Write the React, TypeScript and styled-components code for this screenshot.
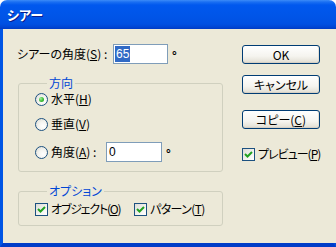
import React from 'react'
import styled, { createGlobalStyle } from 'styled-components'

const GlobalStyle = createGlobalStyle`
  html, body {
    margin: 0;
    padding: 0;
    background: #ffffff;
  }
  body {
    font-family: "Noto Sans CJK JP", "Liberation Sans", sans-serif;
    font-size: 12px;
    font-feature-settings: 'palt';
    color: #000000;
  }
`

const Window = styled.div`
  width: 336px;
  height: 247px;
  display: flex;
  flex-direction: column;
`

const TitleBar = styled.div`
  height: 29px;
  flex: 0 0 29px;
  box-sizing: border-box;
  border-radius: 7px 7px 0 0;
  background: linear-gradient(
    to bottom,
    #3c8cf8 0px,
    #1a6ff2 2px,
    #0058ee 5px,
    #0055e8 16px,
    #0050e2 24px,
    #0046d4 27px,
    #003bc4 29px
  );
  display: flex;
  align-items: center;
  padding: 0 7px 1px;
`

const Title = styled.span`
  color: #ffffff;
  font-weight: bold;
  font-size: 13px;
  text-shadow: 1px 1px 0 #0a1e8c;
`

const Frame = styled.div`
  flex: 1;
  display: flex;
  border-left: 3px solid #0055e5;
  border-right: 3px solid #0048dc;
  border-bottom: 4px solid #003cc8;
  box-shadow: inset 1px 0 0 #0831d9;
`

const Body = styled.div`
  flex: 1;
  display: flex;
  background: #ece9d8;
  padding: 15px 16px 0 14px;
`

const LeftCol = styled.div`
  width: 206px;
  display: flex;
  flex-direction: column;
`

const RightCol = styled.div`
  margin-left: 19px;
  width: 78px;
  display: flex;
  flex-direction: column;
`

const Row = styled.div<{ $h?: number; $mt?: number }>`
  display: flex;
  align-items: center;
  height: ${(p) => p.$h ?? 18}px;
  margin-top: ${(p) => p.$mt ?? 0}px;
  white-space: nowrap;
`

const Label = styled.span<{ $w?: number; $ls?: number }>`
  display: inline-block;
  ${(p) => (p.$w ? `width: ${p.$w}px;` : '')}
  letter-spacing: ${(p) => p.$ls ?? 0}px;
  line-height: 14px;
`

const U = styled.span`
  text-decoration: underline;
  text-underline-offset: 1px;
`

const TextBox = styled.div<{ $w: number }>`
  box-sizing: border-box;
  width: ${(p) => p.$w}px;
  height: 20px;
  border: 1px solid #7f9db9;
  background: #ffffff;
  display: flex;
  align-items: center;
  padding-left: 1px;
  font-family: "Liberation Sans", sans-serif;
  font-size: 12px;
`

const Selected = styled.span`
  background: #316ac5;
  color: #ffffff;
  padding: 1px 1px;
  line-height: 14px;
`

const Plain = styled.span`
  padding-left: 1px;
`

const Degree = styled.span`
  font-family: "Liberation Sans", sans-serif;
  font-size: 12px;
  font-weight: bold;
  margin-left: 4px;
  align-self: flex-start;
  margin-top: 5px;
`

const Group = styled.fieldset<{ $pt: number; $pb: number }>`
  margin: 0 0 0 1px;
  padding: ${(p) => p.$pt}px 0 ${(p) => p.$pb}px 16px;
  border: 1px solid #d0d0bf;
  border-radius: 3px;
  min-width: 0;
  width: 205px;
  box-sizing: border-box;
`

const Legend = styled.legend`
  color: #0046d5;
  padding: 0 2px;
  margin-left: 12px;
  line-height: 14px;
  height: 14px;
`

const RadioCircle = styled.span<{ $checked?: boolean }>`
  box-sizing: border-box;
  width: 13px;
  height: 13px;
  flex: 0 0 13px;
  border-radius: 50%;
  border: 1px solid #1c5180;
  background: radial-gradient(circle at 65% 65%, #ffffff 0%, #f4f4f0 45%, #d8d7cf 100%);
  display: inline-flex;
  align-items: center;
  justify-content: center;
  margin-right: 3px;
  &::after {
    content: '';
    display: ${(p) => (p.$checked ? 'block' : 'none')};
    width: 5px;
    height: 5px;
    border-radius: 50%;
    background: radial-gradient(circle at 35% 35%, #a8f0a0 0%, #3fc03a 50%, #1f8f1c 100%);
  }
`

const CheckBox = styled.span`
  box-sizing: border-box;
  width: 13px;
  height: 13px;
  flex: 0 0 13px;
  border: 1px solid #1c5180;
  background: linear-gradient(135deg, #dcdcd7 0%, #f4f4f0 60%, #ffffff 100%);
  display: inline-flex;
  align-items: center;
  justify-content: center;
  margin-right: 3px;
`

const Check: React.FC = () => (
  <svg width="9" height="9" viewBox="0 0 9 9">
    <path d="M1 4 L3.5 6.5 L8 2" fill="none" stroke="#21a121" strokeWidth="2" />
  </svg>
)

const Button = styled.div<{ $mt: number }>`
  box-sizing: border-box;
  width: 78px;
  height: 19px;
  margin-top: ${(p) => p.$mt}px;
  border: 1px solid #003c74;
  border-radius: 3px;
  background: linear-gradient(to bottom, #ffffff 0%, #f5f4ef 60%, #e6e3d9 90%, #d6d0c5 100%);
  box-shadow: inset 0 -1px 0 #d6d0c5, inset -1px 0 0 #e3e0d6;
  display: flex;
  align-items: center;
  justify-content: center;
  line-height: 14px;
`

const ChecksRow = styled.div`
  display: flex;
  align-items: center;
  height: 18px;
`

const CheckItem = styled.div<{ $w?: number }>`
  display: flex;
  align-items: center;
  ${(p) => (p.$w ? `width: ${p.$w}px;` : '')}
  white-space: nowrap;
`

const App: React.FC = () => {
  return (
    <>
      <GlobalStyle />
      <Window>
        <TitleBar>
          <Title>シアー</Title>
        </TitleBar>
        <Frame>
          <Body>
            <LeftCol>
              <Row $h={20}>
                <Label $w={96}>
                  シアーの角度(<U>S</U>) :
                </Label>
                <TextBox $w={55}>
                  <Selected>65</Selected>
                </TextBox>
                <Degree>°</Degree>
              </Row>
              <div style={{ height: 12 }} />
              <Group $pt={0} $pb={9}>
                <Legend>方向</Legend>
                <Row>
                  <RadioCircle $checked />
                  <Label>
                    水平(<U>H</U>)
                  </Label>
                </Row>
                <Row $mt={7}>
                  <RadioCircle />
                  <Label>
                    垂直(<U>V</U>)
                  </Label>
                </Row>
                <Row $h={20} $mt={9}>
                  <RadioCircle />
                  <Label $w={55}>
                    角度(<U>A</U>) :
                  </Label>
                  <TextBox $w={56}>
                    <Plain>0</Plain>
                  </TextBox>
                  <Degree>°</Degree>
                </Row>
              </Group>
              <div style={{ height: 12 }} />
              <Group $pt={2} $pb={7}>
                <Legend>オプション</Legend>
                <ChecksRow>
                  <CheckItem $w={99}>
                    <CheckBox>
                      <Check />
                    </CheckBox>
                    <Label $ls={-1.2}>
                      オブジェクト(<U>O</U>)
                    </Label>
                  </CheckItem>
                  <CheckItem>
                    <CheckBox>
                      <Check />
                    </CheckBox>
                    <Label $ls={-0.6}>
                      パターン(<U>T</U>)
                    </Label>
                  </CheckItem>
                </ChecksRow>
              </Group>
            </LeftCol>
            <RightCol>
              <Button $mt={1}>OK</Button>
              <Button $mt={11}>キャンセル</Button>
              <Button $mt={16}>
                コピー(<U>C</U>)
              </Button>
              <Row $mt={16}>
                <CheckBox>
                  <Check />
                </CheckBox>
                <Label $ls={-1}>
                  プレビュー(<U>P</U>)
                </Label>
              </Row>
            </RightCol>
          </Body>
        </Frame>
      </Window>
    </>
  )
}

export default App
